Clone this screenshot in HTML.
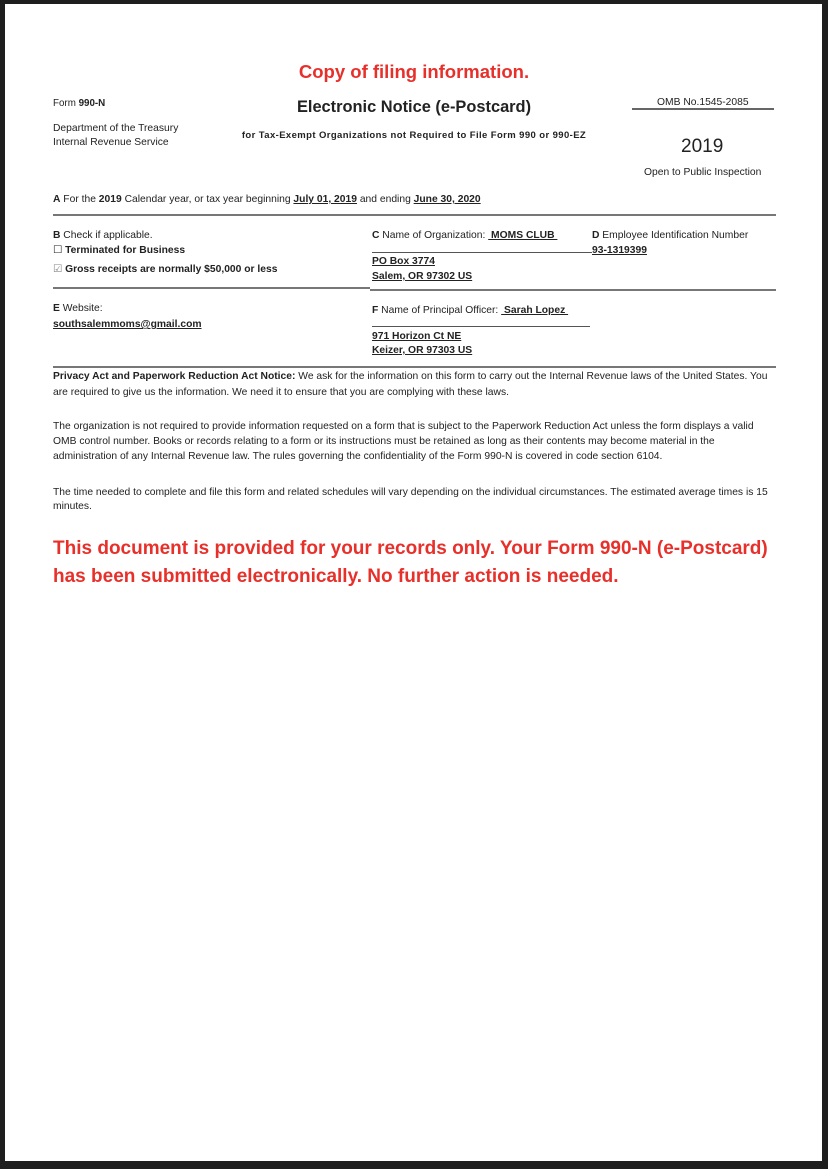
<!DOCTYPE html>
<html><head><meta charset="utf-8"><style>
html,body{margin:0;padding:0;}
body{width:828px;height:1169px;background:#1e1e1e;position:relative;overflow:hidden;font-family:"Liberation Sans",Arial,sans-serif;color:#222;}
#pg{position:absolute;left:5px;top:4px;width:817px;height:1157px;background:#fff;}
.t{position:absolute;white-space:nowrap;font-size:10.3px;line-height:12px;margin-top:2px;}
.b{font-weight:bold;}
.u{text-decoration:underline;}
.r{position:absolute;background:#777;height:2px;}
.l{position:absolute;background:#555;height:1px;}
.red{color:#e8302b;font-weight:bold;}
</style></head><body>
<div id="pg"></div>
<div class="t red" style="left:0;width:828px;text-align:center;top:59px;font-size:18.5px;line-height:22px;">Copy of filing information.</div>
<div class="t" style="left:53px;top:96px;font-size:9.8px;">Form <b>990-N</b></div>
<div class="t b" style="left:0;width:828px;text-align:center;top:96px;font-size:16.4px;line-height:18px;">Electronic Notice (e-Postcard)</div>
<div class="t" style="left:657px;top:95px;">OMB No.1545-2085</div>
<div class="l" style="left:632px;top:108px;width:142px;height:2px;background:#666"></div>
<div class="t" style="left:53px;top:121px;">Department of the Treasury</div>
<div class="t" style="left:53px;top:135px;">Internal Revenue Service</div>
<div class="t b" style="left:0;width:828px;text-align:center;top:128px;font-size:9.5px;letter-spacing:0.4px;">for Tax-Exempt Organizations not Required to File Form 990 or 990-EZ</div>
<div class="t" style="left:681px;top:134px;font-size:19px;line-height:22px;">2019</div>
<div class="t" style="left:644px;top:165px;">Open to Public Inspection</div>
<div class="t" style="left:53px;top:192px;"><b>A</b> For the <b>2019</b> Calendar year, or tax year beginning <b class="u">July 01, 2019</b> and ending <b class="u">June 30, 2020</b></div>
<div class="r" style="left:53px;top:214px;width:723px;"></div>
<div class="t" style="left:53px;top:228px;"><b>B</b> Check if applicable.</div>
<div class="t b" style="left:53px;top:243px;"><span style="font-weight:normal">☐</span> Terminated for Business</div>
<div class="t b" style="left:53px;top:262px;"><span style="font-weight:normal;color:#888">☑</span> Gross receipts are normally $50,000 or less</div>
<div class="r" style="left:53px;top:287px;width:317px;"></div>
<div class="t" style="left:372px;top:228px;"><b>C</b> Name of Organization: <b class="u">&nbsp;MOMS CLUB&nbsp;</b></div>
<div class="l" style="left:372px;top:252px;width:220px;"></div>
<div class="t b u" style="left:372px;top:254px;">PO Box 3774</div>
<div class="t b u" style="left:372px;top:269px;">Salem, OR 97302 US</div>
<div class="r" style="left:370px;top:289px;width:406px;"></div>
<div class="t" style="left:592px;top:228px;"><b>D</b> Employee Identification Number</div>
<div class="t b u" style="left:592px;top:243px;">93-1319399</div>
<div class="t" style="left:53px;top:301px;"><b>E</b> Website:</div>
<div class="t b u" style="left:53px;top:317px;">southsalemmoms@gmail.com</div>
<div class="t" style="left:372px;top:303px;"><b>F</b> Name of Principal Officer: <b class="u">&nbsp;Sarah Lopez&nbsp;</b></div>
<div class="l" style="left:372px;top:326px;width:218px;"></div>
<div class="t b u" style="left:372px;top:329px;">971 Horizon Ct NE</div>
<div class="t b u" style="left:372px;top:343px;">Keizer, OR 97303 US</div>
<div class="r" style="left:53px;top:366px;width:723px;"></div>
<div class="t" style="left:53px;top:369px;"><b>Privacy Act and Paperwork Reduction Act Notice:</b> We ask for the information on this form to carry out the Internal Revenue laws of the United States. You</div>
<div class="t" style="left:53px;top:385px;">are required to give us the information. We need it to ensure that you are complying with these laws.</div>
<div class="t" style="left:53px;top:419px;">The organization is not required to provide information requested on a form that is subject to the Paperwork Reduction Act unless the form displays a valid</div>
<div class="t" style="left:53px;top:434px;">OMB control number. Books or records relating to a form or its instructions must be retained as long as their contents may become material in the</div>
<div class="t" style="left:53px;top:449px;">administration of any Internal Revenue law. The rules governing the confidentiality of the Form 990-N is covered in code section 6104.</div>
<div class="t" style="left:53px;top:485px;">The time needed to complete and file this form and related schedules will vary depending on the individual circumstances. The estimated average times is 15</div>
<div class="t" style="left:53px;top:499px;">minutes.</div>
<div class="t red" style="left:53px;top:536px;font-size:19px;line-height:22px;">This document is provided for your records only. Your Form 990-N (e-Postcard)</div>
<div class="t red" style="left:53px;top:564px;font-size:19px;line-height:22px;">has been submitted electronically. No further action is needed.</div>
</body></html>
